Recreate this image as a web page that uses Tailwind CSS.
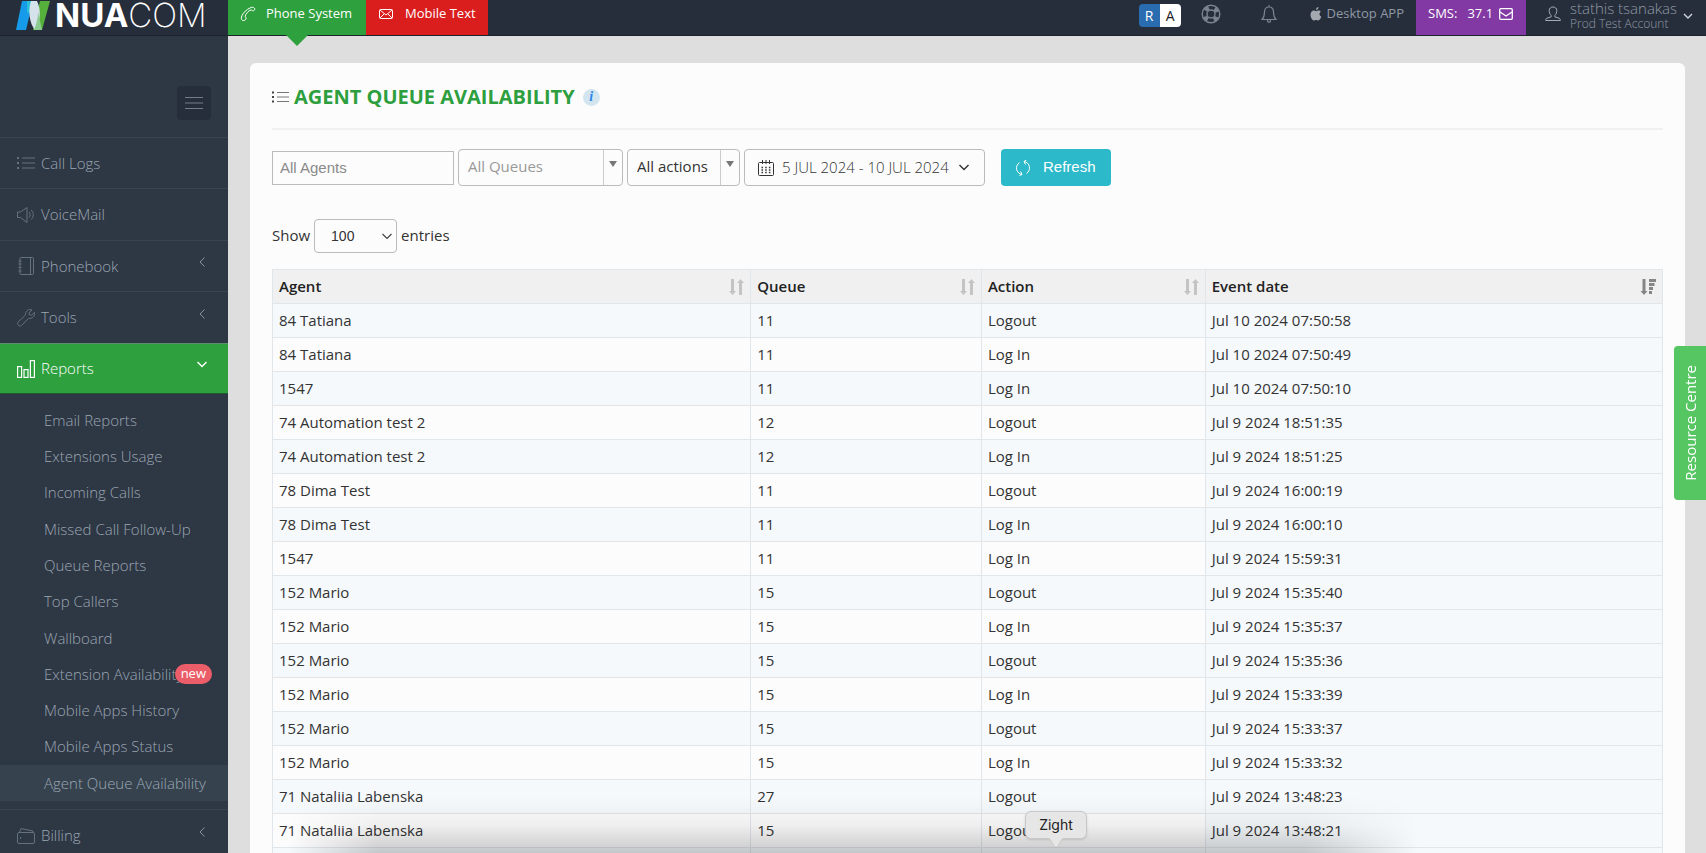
<!DOCTYPE html>
<html lang="en">
<head>
  <meta charset="UTF-8">
  <meta name="viewport" content="width=device-width, initial-scale=1.0">
  <title>Agent Queue Availability - NUACOM</title>
  <script src="https://cdn.jsdelivr.net/npm/@tailwindcss/browser@4"></script>
</head>
<body class="bg-[#dedede] font-['Open_Sans',sans-serif] text-[15px] text-[#333]">
  <div class="relative flex h-screen flex-col overflow-hidden">

    <!-- Header -->
    <header class="flex h-9 shrink-0 items-stretch border-b border-[#1c232d] bg-[#272e3b] text-[#8f99a6]">
      <a href="#" class="flex w-57 shrink-0 items-start gap-[5px] pl-4" aria-label="NUACOM">
        <svg class="h-[30px] w-[34px] shrink-0" viewBox="0 0 34 30">
          <path d="M6 1h11l-7 29H0z" fill="#159be9"/>
          <path d="M11 1h8l-2 14-6-3z" fill="#2bc0d8"/>
          <path d="M24 1h10l-8 29h-9z" fill="#56b13c"/>
          <path d="M15 1h6c4 8 4 20-2 29-6-7-7-20-4-29z" fill="#d5e2ec"/>
          <path d="M22 12l4 18h-8c2-5 4-11 4-18z" fill="#8bcb8f"/>
        </svg>
        <span class="flex font-['Inter',sans-serif] text-[33px] leading-[30px] text-white"><b class="font-bold">NUA</b><span class="font-extralight">COM</span></span>
      </a>
      <nav class="flex text-[13px] text-white">
        <a href="#" class="relative flex w-[138px] items-center bg-[#2ea03e] pb-2 pl-3">
          <svg class="mr-[10px] size-4" viewBox="0 0 16 16" fill="none" stroke="currentColor"><path d="M10 2c1.500-1 3.500-1 4.300 0s.6 2-.4 2.500c-1 .6-2 .2-2.700-.7-3 1-5.500 4-6.200 7 1 .4 1.400 1.300.9 2.300-.7 1.500-2.400 1.800-3.600 1.200S1 11.500 2 9.500C3.500 6.500 6.500 3.500 10 2z"/></svg>
          Phone System
          <span class="absolute top-[35px] left-1/2 -translate-x-1/2 border-x-[11px] border-t-[11px] border-x-transparent border-t-[#2ea03e]"></span>
        </a>
        <a href="#" class="flex w-[122px] items-center bg-[#da1e1e] pb-2 pl-[13px]">
          <svg class="mr-3 h-4 w-[14px]" viewBox="0 0 14 16" fill="none" stroke="currentColor"><rect x=".5" y="3.500" width="13" height="9" rx="1"/><path d="M1 4l6 5 6-5M1 12l4-4M13 12L9 8"/></svg>
          Mobile Text
        </a>
      </nav>
      <div class="ml-auto flex text-[13px]">
        <div class="mt-1 mr-5 flex h-[23px] w-[42px] overflow-hidden rounded-sm text-center text-sm leading-[23px]">
          <a href="#" class="flex-1 bg-[#2a6cb0] text-white">R</a>
          <a href="#" class="flex-1 bg-white text-[#222]">A</a>
        </div>
        <button class="mr-10 flex items-center pb-2" aria-label="Help">
          <svg class="size-5" viewBox="0 0 20 20" fill="none" stroke="#7a8491"><circle cx="10" cy="10" r="8.800" stroke-width="1.400"/><circle cx="10" cy="10" r="4" stroke-width="1.400"/><circle cx="10" cy="10" r="6.400" stroke-width="4" stroke-dasharray="4 6.053" stroke-dashoffset="-3"/></svg>
        </button>
        <button class="mr-8 flex items-center pb-2" aria-label="Notifications">
          <svg class="h-5 w-4" viewBox="0 0 16 20" fill="none" stroke="#7a8491" stroke-width="1.200"><path d="M1 15.500c2-2 2.500-4 2.500-7.500C3.500 5 5 3 8 3s4.500 2 4.500 5c0 3.500.5 5.500 2.500 7.500zM8 3V1M6.500 16c0 3 3 3 3 0"/></svg>
        </button>
        <a href="#" class="mr-3 flex items-center gap-1 pb-2 whitespace-nowrap">
          <svg class="size-[14px]" viewBox="0 0 14 14" fill="#a4a9b0"><path d="M9.500 0c.1 1.500-1 2.900-2.500 3C6.900 1.500 8 .2 9.500 0zM11.800 4.800C9.800 6 10.200 8.800 12.300 9.600 11.700 11.500 10.500 13.500 9.300 13.500c-.9 0-1.200-.5-2.200-.5s-1.400.5-2.200.5C3.200 13.500 1.500 10.500 1.500 7.800c0-2.600 1.600-4.200 3.300-4.200 1 0 1.700.6 2.400.6s1.500-.7 2.600-.7c.8 0 1.500.5 2 1.300z"/></svg>
          Desktop APP
        </a>
        <a href="#" class="flex w-[110px] items-center bg-[#8239a3] pb-2 pl-3 text-white">
          <span class="mr-[10px]">SMS:</span><span class="mr-[6px]">37.1</span>
          <svg class="h-3 w-[14px]" viewBox="0 0 14 12" fill="none" stroke="currentColor" stroke-width="1.300"><rect x=".7" y=".7" width="12.600" height="10.600" rx="1"/><path d="M1 4l6 4 6-4"/></svg>
        </a>
        <button class="flex w-[180px] items-center pl-[19px] text-left">
          <svg class="mr-[9px] mb-2 size-4 shrink-0" viewBox="0 0 16 16" fill="none" stroke="#a4acb6"><path d="M8 1c5 0 4.500 6 1.800 8.500v1.300l4.200 1.400c1 .4 1.300 1 1.300 2.300H.7c0-1.300.3-1.900 1.300-2.300l4.200-1.400V9.500C3.500 7 3 1 8 1z"/></svg>
          <span class="mb-[5px] flex flex-col font-light whitespace-nowrap">
            <span class="text-[15px] leading-4">stathis tsanakas</span>
            <span class="text-xs leading-[15px]">Prod Test Account</span>
          </span>
          <svg class="mb-1 ml-[6px] h-2 w-[10px]" viewBox="0 0 10 8" fill="none" stroke="#cfd4da" stroke-width="1.400"><path d="M1 2l4 4 4-4"/></svg>
        </button>
      </div>
    </header>

    <div class="flex min-h-0 flex-1">
      <!-- Sidebar -->
      <aside class="w-57 shrink-0 overflow-hidden bg-[#2e3744] font-light text-[#9ba6b3]">
        <div class="flex h-[101px] justify-end pt-[50px] pr-[17px]">
          <button class="flex size-[34px] items-center justify-center rounded bg-[#272e3b]" aria-label="Toggle menu">
            <svg class="h-[14px] w-[18px]" viewBox="0 0 18 14" stroke="#727d8a" stroke-width="1.200"><path d="M0 1.500h18M0 7h18M0 12.500h18"/></svg>
          </button>
        </div>
        <nav>
          <a href="#" class="flex h-[51px] items-center gap-[6px] border-t border-[#374551] pl-[17px]">
            <svg class="size-[18px]" viewBox="0 0 18 18" stroke="#647180" fill="none"><path d="M5 4h13M5 9h13M5 14h13"/><path d="M0 4h2M0 9h2M0 14h2" stroke-width="2"/></svg>
            Call Logs
          </a>
          <a href="#" class="flex h-13 items-center gap-[6px] border-t border-[#374551] pl-[17px]">
            <svg class="size-[18px]" viewBox="0 0 18 18" stroke="#647180" fill="none"><path d="M.5 6v5.500h3l6.500 5v-15l-6.500 4.500zM12 6c1.500 1.500 1.500 4 0 5.500M14 4c3 2.500 3 7 0 9.500"/></svg>
            VoiceMail
          </a>
          <a href="#" class="flex h-[51px] items-center gap-[6px] border-t border-[#374551] pr-[23px] pl-[17px]">
            <svg class="size-[18px]" viewBox="0 0 18 18" stroke="#647180" fill="none"><rect x="3" y=".5" width="13.500" height="17" rx="1"/><path d="M13.500.5v17M1.500 4h3M1.500 7h3M1.500 10.500h3M1.500 14h3"/></svg>
            Phonebook
            <svg class="mb-2 ml-auto h-[10px] w-[6px]" viewBox="0 0 6 10" fill="none" stroke="#8793a0"><path d="M5.500.5L1 5l4.500 4.500"/></svg>
          </a>
          <a href="#" class="flex h-13 items-center gap-[6px] border-t border-[#374551] pr-[23px] pl-[17px]">
            <svg class="size-[18px]" viewBox="0 0 18 18" stroke="#647180" fill="none"><path d="M15 1c-3-1.300-6.800.5-6.500 5L1.200 13c-1.700 2 1 5.300 3.300 3.500l7-7.200c4 .8 6.700-2.300 6-6L14.500 6.300 12 5.500V3.800z"/></svg>
            Tools
            <svg class="mb-2 ml-auto h-[10px] w-[6px]" viewBox="0 0 6 10" fill="none" stroke="#8793a0"><path d="M5.500.5L1 5l4.500 4.500"/></svg>
          </a>
          <a href="#" class="flex h-[51px] items-center gap-[6px] border-t border-b border-t-[#5b8f6e] border-b-[#1e5a2e] bg-[#2ea03e] pr-[21px] pl-[17px] text-white">
            <svg class="size-[18px]" viewBox="0 0 18 18" stroke="currentColor" fill="none" stroke-width="1.200"><rect x=".6" y="6.600" width="4" height="10.800"/><rect x="7" y="9.600" width="4" height="7.800"/><rect x="13.400" y=".6" width="4" height="16.800"/></svg>
            Reports
            <svg class="mb-2 ml-auto h-[7px] w-[10px]" viewBox="0 0 10 7" fill="none" stroke="currentColor" stroke-width="1.400"><path d="M.5 1L5 5.500 9.500 1"/></svg>
          </a>
          <ul class="mt-2 mb-2 grid h-[399px] auto-rows-fr">
            <li><a href="#" class="flex h-full items-center pl-11">Email Reports</a></li>
            <li><a href="#" class="flex h-full items-center pl-11">Extensions Usage</a></li>
            <li><a href="#" class="flex h-full items-center pl-11">Incoming Calls</a></li>
            <li><a href="#" class="flex h-full items-center pl-11">Missed Call Follow-Up</a></li>
            <li><a href="#" class="flex h-full items-center pl-11">Queue Reports</a></li>
            <li><a href="#" class="flex h-full items-center pl-11">Top Callers</a></li>
            <li><a href="#" class="flex h-full items-center pl-11">Wallboard</a></li>
            <li class="relative">
              <a href="#" class="flex h-full items-center pl-11">Extension Availability</a>
              <span class="absolute top-2 right-4 h-5 rounded-full bg-[#eb5d68] px-[6px] text-[13px] leading-[19px] font-normal text-white">new</span>
            </li>
            <li><a href="#" class="flex h-full items-center pl-11">Mobile Apps History</a></li>
            <li><a href="#" class="flex h-full items-center pl-11">Mobile Apps Status</a></li>
            <li><a href="#" class="flex h-full items-center bg-[#36434f] pl-11">Agent Queue Availability</a></li>
          </ul>
          <a href="#" class="flex h-13 items-center gap-[6px] border-t border-[#374551] pr-[23px] pl-[17px]">
            <svg class="size-[18px]" viewBox="0 0 18 18" stroke="#647180" fill="none"><rect x=".5" y="5.500" width="17" height="11" rx="1.500"/><path d="M2.500 5.500L4 1.500l12 2.500v1.500M3.500 10v2"/></svg>
            Billing
            <svg class="mb-2 ml-auto h-[10px] w-[6px]" viewBox="0 0 6 10" fill="none" stroke="#8793a0"><path d="M5.500.5L1 5l4.500 4.500"/></svg>
          </a>
        </nav>
      </aside>

      <!-- Main Content -->
      <main class="min-w-0 flex-1 pt-[27px] pr-[21px] pl-[22px]">
        <section class="rounded-md bg-[#fcfcfc] px-[22px] pt-5">
          <div class="flex items-center border-b-2 border-[#f0f0f0] pb-[17px]">
            <svg class="mr-[5px] h-3 w-[17px]" viewBox="0 0 17 12" stroke="#777"><path d="M5 1.500h12M5 6h12M5 10.500h12"/><path d="M0 1.500h2M0 6h2M0 10.500h2" stroke="#444" stroke-width="2"/></svg>
            <h1 class="text-xl leading-7 font-bold text-[#2e9f3e]">AGENT QUEUE AVAILABILITY</h1>
            <span class="ml-2 flex size-[17px] items-center justify-center rounded-full bg-[#d3e6f0] font-['Liberation_Serif',serif] text-sm leading-none font-bold text-[#2b88e6] italic">i</span>
          </div>

          <form class="flex items-center gap-1 pt-[19px]">
            <input type="text" aria-label="Agents" placeholder="All Agents" class="h-[34px] w-[182px] border border-[#bbb] px-[7px] font-['Liberation_Sans',sans-serif] text-[15px] placeholder:text-[#8a8a8a]">
            <div class="relative h-[37px] w-[165px]">
              <select aria-label="Queue" class="size-full appearance-none rounded border border-[#bbb] pb-[2px] pl-[9px] text-[15px] text-[#999]"><option>All Queues</option></select>
              <span class="pointer-events-none absolute inset-y-px right-px flex w-[19px] justify-center border-l border-[#ccc] pt-[11px]"><span class="h-0 border-x-[4px] border-t-[6px] border-x-transparent border-t-[#777]"></span></span>
            </div>
            <div class="relative h-[37px] w-[113px]">
              <select aria-label="Action" class="size-full appearance-none rounded border border-[#bbb] pb-[2px] pl-[9px] text-[15px]"><option>All actions</option></select>
              <span class="pointer-events-none absolute inset-y-px right-px flex w-[19px] justify-center border-l border-[#ccc] pt-[11px]"><span class="h-0 border-x-[4px] border-t-[6px] border-x-transparent border-t-[#777]"></span></span>
            </div>
            <button type="button" class="flex h-[37px] w-[241px] items-center rounded border border-[#bbb] pl-[13px] font-light whitespace-nowrap">
              <svg class="mr-2 size-4" viewBox="0 0 16 16" fill="none" stroke="#333"><rect x=".5" y="2.500" width="15" height="13" rx="1"/><path d="M4.500 0v4M8 0v4M11.500 0v4"/><path d="M3.500 7.500h9M3.500 10h9M3.500 12.500h9" stroke-width="1.400" stroke-dasharray="1.500 2.200"/></svg>
              5 JUL 2024 - 10 JUL 2024
              <svg class="ml-[10px] h-[7px] w-[10px]" viewBox="0 0 10 7" fill="none" stroke="#333" stroke-width="1.400"><path d="M.5 1L5 5.500 9.500 1"/></svg>
            </button>
            <button type="button" class="ml-3 flex h-[37px] w-[110px] items-center rounded bg-[#2cb9c9] pl-[14px] font-['Liberation_Sans',sans-serif] text-[15px] text-white">
              <svg class="mr-3 size-4" viewBox="0 0 16 16" fill="none" stroke="currentColor"><path d="M7 14.500C1 13.500-.5 6 4.500 2.500M9 1.500c6 1 7.500 8.500 2.500 12M9 1.500l2.500-1.500M9 1.500l1.500 3M7 14.500l-2.500 1M7 14.500l-1.500-3"/></svg>
              Refresh
            </button>
          </form>

          <div class="flex items-center gap-1 pt-[33px] pb-4">
            <label for="entries" class="pb-[2px]">Show</label>
            <div class="relative h-[34px] w-[83px]">
              <select id="entries" class="size-full appearance-none rounded border border-[#bbb] pl-4 font-['Liberation_Sans',sans-serif] text-sm"><option>100</option></select>
              <svg class="pointer-events-none absolute top-[14px] right-[5px] h-[7px] w-[10px]" viewBox="0 0 10 7" fill="none" stroke="#444" stroke-width="1.200"><path d="M.5 1L5 5.500 9.500 1"/></svg>
            </div>
            <span class="pb-[2px]">entries</span>
          </div>

          <table class="w-full table-fixed border-collapse text-left">
            <colgroup><col class="w-[34.4%]"><col class="w-[16.6%]"><col class="w-[16.1%]"><col></colgroup>
            <thead class="bg-[#f0f0f0] text-[#222]">
              <tr class="h-[34px]">
                <th class="border border-[#e1e6eb] px-[6px] font-semibold">
                  <span class="flex items-center justify-between">Agent <svg class="h-4 w-[15px]" viewBox="0 0 15 16" fill="#c4c4c4"><path d="M2 0h3v12h2l-3.500 4L0 12h2zM10 16h3V4h2l-3.500-4L8 4h2z"/></svg></span>
                </th>
                <th class="border border-[#e1e6eb] px-[6px] font-semibold">
                  <span class="flex items-center justify-between">Queue <svg class="h-4 w-[15px]" viewBox="0 0 15 16" fill="#c4c4c4"><path d="M2 0h3v12h2l-3.500 4L0 12h2zM10 16h3V4h2l-3.500-4L8 4h2z"/></svg></span>
                </th>
                <th class="border border-[#e1e6eb] px-[6px] font-semibold">
                  <span class="flex items-center justify-between">Action <svg class="h-4 w-[15px]" viewBox="0 0 15 16" fill="#c4c4c4"><path d="M2 0h3v12h2l-3.500 4L0 12h2zM10 16h3V4h2l-3.500-4L8 4h2z"/></svg></span>
                </th>
                <th class="border border-[#e1e6eb] px-[6px] font-semibold">
                  <span class="flex items-center justify-between">Event date <svg class="h-4 w-4" viewBox="0 0 16 16" fill="#868686"><path d="M2.500 0h3v12h2L4 16 .5 12h2zM9 0h7v3H9zM9 4h5.500v3H9zM9 8h4v3H9zM9 12h3v3H9z"/></svg></span>
                </th>
              </tr>
            </thead>
            <tbody id="rows"></tbody>
          </table>
        </section>
      </main>
    </div>

    <button class="absolute top-[346px] right-0 flex h-[154px] w-8 items-center justify-center rounded-l bg-[#56c663] text-white"><span class="rotate-180 [writing-mode:vertical-rl]">Resource Centre</span></button>

    <!-- Dock shadow and tooltip -->
    <div class="pointer-events-none absolute right-72 bottom-0 left-72 h-14 bg-gradient-to-t from-black/20 via-black/5 to-transparent [mask-image:linear-gradient(to_right,transparent,black_8%,black_90%,transparent)]"></div>
    <div role="tooltip" class="absolute top-[811px] left-[1025px] h-7 w-[62px] rounded-md border border-[#c8c8c8] bg-[#e6e6e6] text-center font-['Inter',sans-serif] text-sm leading-[26px] text-[#222] shadow">
      Zight
      <svg class="absolute top-[26px] left-[22px] h-[10px] w-4" viewBox="0 0 16 10"><path d="M0 0c3 0 5 9 8 9s5-9 8-9" fill="#e6e6e6" stroke="#c8c8c8"/></svg>
    </div>
  </div>

  <script>
    var rows = [
      ["84 Tatiana", "11", "Logout", "Jul 10 2024 07:50:58"],
      ["84 Tatiana", "11", "Log In", "Jul 10 2024 07:50:49"],
      ["1547", "11", "Log In", "Jul 10 2024 07:50:10"],
      ["74 Automation test 2", "12", "Logout", "Jul 9 2024 18:51:35"],
      ["74 Automation test 2", "12", "Log In", "Jul 9 2024 18:51:25"],
      ["78 Dima Test", "11", "Logout", "Jul 9 2024 16:00:19"],
      ["78 Dima Test", "11", "Log In", "Jul 9 2024 16:00:10"],
      ["1547", "11", "Log In", "Jul 9 2024 15:59:31"],
      ["152 Mario", "15", "Logout", "Jul 9 2024 15:35:40"],
      ["152 Mario", "15", "Log In", "Jul 9 2024 15:35:37"],
      ["152 Mario", "15", "Logout", "Jul 9 2024 15:35:36"],
      ["152 Mario", "15", "Log In", "Jul 9 2024 15:33:39"],
      ["152 Mario", "15", "Logout", "Jul 9 2024 15:33:37"],
      ["152 Mario", "15", "Log In", "Jul 9 2024 15:33:32"],
      ["71 Nataliia Labenska", "27", "Logout", "Jul 9 2024 13:48:23"],
      ["71 Nataliia Labenska", "15", "Logout", "Jul 9 2024 13:48:21"],
      ["", "", "", ""]
    ];
    var res = "";
    for (var i = 0; i < rows.length; i++) {
      var r = rows[i];
      res += `<tr class="h-[34px] odd:bg-[#f5f9fc]">
        <td class="border border-[#e1e6eb] px-[6px]">` + r[0] + `</td>
        <td class="border border-[#e1e6eb] px-[6px]">` + r[1] + `</td>
        <td class="border border-[#e1e6eb] px-[6px]">` + r[2] + `</td>
        <td class="border border-[#e1e6eb] bg-[#f5f9fc] px-[6px]">` + r[3] + `</td>
      </tr>`;
    }
    document.getElementById("rows").innerHTML = res;
  </script>
</body>
</html>
